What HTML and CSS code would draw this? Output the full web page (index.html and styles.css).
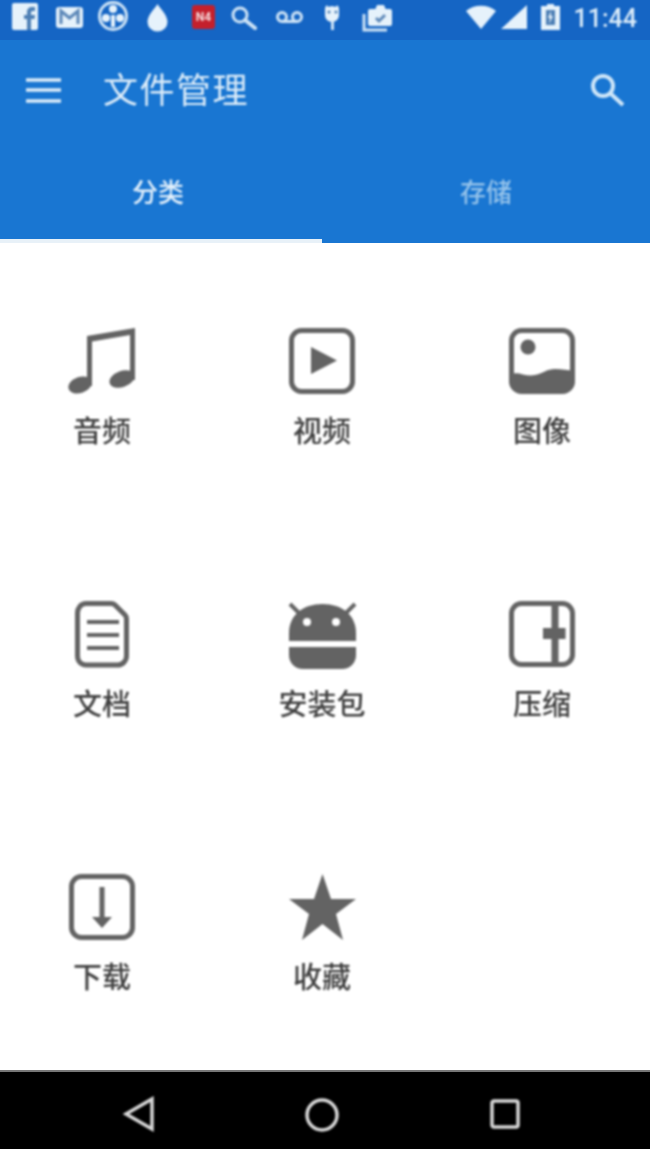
FILE: index.html
```html
<!DOCTYPE html>
<html lang="zh-CN">

<head>
    <meta charset="UTF-8">
    <meta name="viewport" content="width=device-width, initial-scale=1.0">
    <title>文件管理</title>
    <link rel="stylesheet" href="styles.css">
</head>

<body>
    <div class="screen">
        <div class="status-bar">
            <div class="notify-icons">
                <svg class="st-icon" viewBox="0 0 30 34"><rect class="st-fill" x="2" y="3" width="26" height="27" rx="2"/><path class="st-dark" d="M17 30V19h-3v-4h3v-3c0-3 2-5 5-5h3v4h-2c-1.500 0-2 .5-2 2v2h4l-.5 4H21v11z"/></svg>
                <svg class="st-icon" viewBox="0 0 30 34"><rect class="st-fill" x="2" y="7" width="27" height="21" rx="3"/><path class="st-line-dark" d="M7 24V11l8.500 7L24 11v13"/></svg>
                <svg class="st-icon" viewBox="0 0 30 34"><circle class="st-line" cx="15" cy="16" r="13.500"/><circle class="st-fill" cx="15" cy="9" r="4"/><circle class="st-fill" cx="8" cy="18" r="4"/><circle class="st-fill" cx="22" cy="18" r="4"/><path class="st-fill" d="M13 15h4v12h-4z"/></svg>
                <svg class="st-icon" viewBox="0 0 30 34"><path class="st-fill" d="M15.500 4c3 5 10 11 10 18a10 9.500 0 0 1-20 0c0-7 7-13 10-18z"/></svg>
                <svg class="st-icon" viewBox="0 0 30 34"><rect class="st-red" x="6" y="5" width="23" height="24" rx="3"/><text class="st-red-text" x="17.500" y="21">N4</text></svg>
                <svg class="st-icon" viewBox="0 0 30 34"><circle class="st-line" cx="10" cy="15" r="7"/><path class="st-line st-round" d="M15 20l10 8"/></svg>
                <svg class="st-icon" viewBox="0 0 30 34"><circle class="st-line" cx="8" cy="17" r="4.500"/><circle class="st-line" cx="23" cy="17" r="4.500"/><path class="st-line" d="M8 21.500h15"/></svg>
                <svg class="st-icon" viewBox="0 0 30 34"><path class="st-fill" d="M7 9c0-2 1-3 2-4l1 2c2-1 6-1 8 0l1-2c1 1 2 2 2 4v6c0 4-3 7-7 7s-7-3-7-7z"/><circle class="st-dark" cx="11" cy="12" r="1.500"/><circle class="st-dark" cx="18" cy="12" r="1.500"/><path class="st-line" d="M14.500 21v9"/></svg>
                <svg class="st-icon" viewBox="0 0 30 34"><path class="st-line" d="M2 14v16h23"/><rect class="st-fill" x="6" y="9" width="24" height="17" rx="2"/><path class="st-fill" d="M13 10l2-5h7l2 5z"/><path class="st-line-dark" d="M14 18l3 3 6-6"/></svg>
            </div>
            <div class="system-icons">
                <svg class="wifi" viewBox="0 0 30 34"><path class="st-fill" d="M0 11C8 4 22 4 30 11L15 29z"/></svg>
                <svg class="signal" viewBox="0 0 26 34"><path class="st-fill" d="M0 29L26 5v24z"/></svg>
                <svg class="battery" viewBox="0 0 19 34"><path class="st-fill" d="M6 4h7v2h6v24H0V6h6z"/><rect class="st-dark" x="5" y="10" width="9" height="15"/><path class="st-fill" d="M10 11l-3 7h2l-1 6 4-8h-2z"/></svg>
                <span class="clock">11:44</span>
            </div>
        </div>

        <div class="app-bar">
            <div class="toolbar">
                <svg class="menu-icon" viewBox="0 0 36 26"><path d="M0 3h35M0 13h35M0 24h35"/></svg>
                <h1 class="title">文件管理</h1>
                <svg class="search-icon" viewBox="0 0 36 36"><circle cx="14" cy="14" r="10"/><path d="M21 21l13 12"/></svg>
            </div>
            <div class="tabs">
                <div class="tab tab-active"><span>分类</span></div>
                <div class="tab"><span>存储</span></div>
            </div>
        </div>

        <div class="content">
            <div class="grid">
                <div class="item">
                    <svg class="icon" viewBox="0 0 66 66">
                        <path class="fill" d="M18 8L66 0v52h-5V7L23 13.500V58h-5z"/>
                        <ellipse class="fill" cx="11" cy="57" rx="12" ry="8" transform="rotate(-20 11 57)"/>
                        <ellipse class="fill" cx="53" cy="51" rx="13" ry="8" transform="rotate(-20 53 51)"/>
                    </svg>
                    <span class="label">音频</span>
                </div>
                <div class="item">
                    <svg class="icon" viewBox="0 0 66 66">
                        <rect class="line" x="2.500" y="2.500" width="61" height="61" rx="10"/>
                        <path class="fill" d="M22 19l26 13.500L22 46z"/>
                    </svg>
                    <span class="label">视频</span>
                </div>
                <div class="item">
                    <svg class="icon" viewBox="0 0 66 66">
                        <path class="fill" d="M2 46c8-3 14 3 24 1 9-2 12-6 20-6 7 0 13 1 18 2v11c0 6-4 10-10 10H12C6 64 2 60 2 54z"/>
                        <rect class="line" x="2.500" y="2.500" width="61" height="61" rx="10"/>
                        <circle class="fill" cx="19" cy="19" r="7.500"/>
                    </svg>
                    <span class="label">图像</span>
                </div>

                <div class="item">
                    <svg class="icon" viewBox="0 0 66 66">
                        <path class="line" d="M17 2.500h25c2 0 3 .5 4 1.500l10 10c1 1 1.500 2 1.500 4v37c0 5-4 9-9 9H17c-5 0-8.500-4-8.500-9v-43c0-5 3.500-9.500 8.500-9.500z"/>
                        <path class="thin" d="M18 21h32M18 34h32M18 47h32"/>
                    </svg>
                    <span class="label">文档</span>
                </div>
                <div class="item">
                    <svg class="icon" viewBox="0 0 66 66">
                        <path class="thin" d="M1 3l11 11M66 3L55 14"/>
                        <path class="fill" d="M0 40V32C0 14 14 3 33.500 3S67 14 67 32v8z"/>
                        <path class="fill" d="M0 46h67v8c0 8-6 14-14 14H14C6 68 0 62 0 54z"/>
                        <circle class="hole" cx="18" cy="21" r="4"/>
                        <circle class="hole" cx="47" cy="21" r="4"/>
                    </svg>
                    <span class="label">安装包</span>
                </div>
                <div class="item">
                    <svg class="icon" viewBox="0 0 66 66">
                        <rect class="line" x="2.500" y="2.500" width="61" height="61" rx="10"/>
                        <path class="fill" d="M42.500 3h7v24h7v11h-7v25h-7V38H34V27h8.500z"/>
                    </svg>
                    <span class="label">压缩</span>
                </div>

                <div class="item">
                    <svg class="icon" viewBox="0 0 66 66">
                        <rect class="line" x="2.500" y="2.500" width="61" height="61" rx="10"/>
                        <path class="fill" d="M30.500 13h5v30H43L33 54 23 43h7.500z"/>
                    </svg>
                    <span class="label">下载</span>
                </div>
                <div class="item">
                    <svg class="icon" viewBox="0 0 66 66">
                        <path class="fill" d="M33.500 0L42 25h25L47 40l7 26-20.500-16L13 66l7-26L0 25h25z"/>
                    </svg>
                    <span class="label">收藏</span>
                </div>
            </div>
        </div>

        <div class="nav-bar">
            <svg class="nav-back" viewBox="0 0 32 36"><path d="M3 18L29 3v30z"/></svg>
            <svg class="nav-home" viewBox="0 0 34 34"><circle cx="17" cy="17" r="15"/></svg>
            <svg class="nav-recent" viewBox="0 0 30 30"><rect x="2" y="2" width="26" height="26" rx="2"/></svg>
        </div>
    </div>
</body>

</html>
```

FILE: styles.css
```css
* {
    padding: 0;
    margin: 0;
    box-sizing: border-box;
}

body {
    background-color: white;
    font-family: "Noto Sans CJK SC", "Noto Sans", sans-serif;
}

.screen {
    display: flex;
    flex-direction: column;
    height: 1149px;
    overflow: hidden;
}

/* the source picture is soft, so everything drawn on the bars is too */
.notify-icons,
.system-icons,
.toolbar,
.tab span,
.item,
.nav-bar svg {
    filter: blur(0.8px);
}

/* status bar */
.status-bar {
    display: flex;
    flex: none;
    justify-content: space-between;
    height: 40px;
    padding: 0 13px 0 10px;
    background-color: #1565c4;
}

.notify-icons {
    display: flex;
    gap: 14px;
}

.system-icons {
    display: flex;
}

.st-icon,
.wifi {
    width: 30px;
    height: 34px;
}

.signal {
    width: 26px;
    height: 34px;
    margin-left: 5px;
}

.battery {
    width: 19px;
    height: 34px;
    margin-left: 14px;
}

.clock {
    margin-left: 14px;
    height: 34px;
    line-height: 37px;
    font-family: Roboto, sans-serif;
    font-size: 25px;
    font-weight: 500;
    color: #dcecf9;
}

.st-fill {
    fill: #e6f2fb;
}

.st-dark {
    fill: #4d7fb5;
}

.st-line {
    fill: none;
    stroke: #cfe4f6;
    stroke-width: 3;
}

.st-round {
    stroke-linecap: round;
    stroke-width: 4;
}

.st-line-dark {
    fill: none;
    stroke: #5d88b8;
    stroke-width: 3;
}

.st-red {
    fill: #c4202c;
}

.st-red-text {
    fill: #f6dcdc;
    font-family: Roboto, sans-serif;
    font-size: 12px;
    font-weight: 700;
    text-anchor: middle;
}

/* app bar */
.app-bar {
    display: flex;
    flex: none;
    flex-direction: column;
    height: 203px;
    background-color: #1976d2;
}

.toolbar {
    display: flex;
    align-items: center;
    height: 100px;
    padding: 0 25px 0 26px;
}

.menu-icon {
    width: 36px;
    height: 26px;
    fill: none;
    stroke: #dcecf9;
    stroke-width: 3.5;
}

.title {
    flex: 1;
    margin: 0 0 5px 41px;
    font-size: 35px;
    font-weight: 400;
    letter-spacing: 1.5px;
    color: #dcecf9;
}

.search-icon {
    width: 36px;
    height: 36px;
    fill: none;
    stroke: #cfe6f8;
    stroke-width: 4;
}

.tabs {
    display: flex;
    flex: 1;
}

.tab {
    display: flex;
    justify-content: center;
    width: 322px;
    padding-top: 32px;
    font-size: 26px;
    font-weight: 500;
    color: #94c2ea;
}

.tab + .tab {
    flex: 1;
}

.tab-active {
    padding-right: 6px;
    color: #e3f0fb;
    border-bottom: 4px solid #e8f1f8;
}

/* categories */
.content {
    flex: 1;
    min-height: 0;
    padding: 85px 0 0 2px;
}

.grid {
    display: grid;
    grid-template-columns: repeat(3, 200px);
    grid-auto-rows: 273px;
    column-gap: 20px;
}

.item {
    display: flex;
    flex-direction: column;
    align-items: center;
}

.icon {
    width: 66px;
    height: 66px;
    overflow: visible;
}

.fill {
    fill: #636363;
}

.line {
    fill: none;
    stroke: #636363;
    stroke-width: 5;
}

.thin {
    fill: none;
    stroke: #636363;
    stroke-width: 4;
}

.hole {
    fill: white;
}

.label {
    margin-top: 14px;
    font-size: 29px;
    font-weight: 500;
    line-height: 42px;
    color: #404040;
}

/* bottom nav */
.nav-bar {
    position: relative;
    flex: none;
    height: 79px;
    background-color: black;
    border-top: 2px solid #777;
}

.nav-bar svg {
    position: absolute;
    fill: none;
    stroke: #d8d8d8;
    stroke-width: 3.5;
}

.nav-back {
    left: 123px;
    top: 24px;
    width: 32px;
    height: 36px;
}

.nav-home {
    left: 305px;
    top: 26px;
    width: 34px;
    height: 34px;
}

.nav-recent {
    left: 490px;
    top: 27px;
    width: 30px;
    height: 30px;
}
```
